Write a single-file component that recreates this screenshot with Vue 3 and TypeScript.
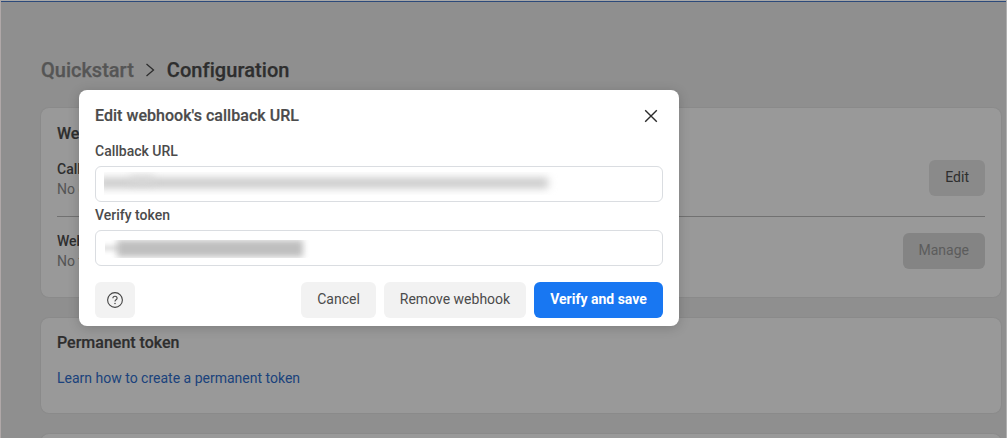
<script setup lang="ts">
const rows = [
  { label: 'Callback URL', value: 'No callback URL configured', action: 'Edit', disabled: false },
  { label: 'Webhook fields', value: 'No fields subscribed', action: 'Manage', disabled: true },
]
</script>

<template>
  <div class="frame">
    <main class="page">
      <h1 class="crumbs">
        <span class="crumb-parent">Quickstart</span>
        <svg class="chev" width="12" height="14" viewBox="0 0 12 14" aria-hidden="true">
          <path d="M1.5 1 L8.5 7 L1.5 13" fill="none" stroke="#4b4b4b" stroke-width="1.3" />
        </svg>
        <span class="crumb-current">Configuration</span>
      </h1>

      <section class="card webhook">
        <h2>Webhook</h2>
        <div v-for="r in rows" :key="r.label" class="row">
          <div class="row-text">
            <div class="row-label">{{ r.label }}</div>
            <div class="row-value">{{ r.value }}</div>
          </div>
          <button class="btn" :class="{ disabled: r.disabled }">{{ r.action }}</button>
        </div>
      </section>

      <section class="card token">
        <h2>Permanent token</h2>
        <a class="link">Learn how to create a permanent token</a>
      </section>

      <section class="card stub"></section>
    </main>

    <div class="overlay">
      <div class="edge"></div>
      <div class="modal">
        <header class="modal-head">
          <span class="modal-title">Edit webhook's callback URL</span>
          <svg width="16" height="16" viewBox="0 0 16 16" aria-hidden="true">
            <path d="M2.2 2.2 L13.8 13.8 M13.8 2.2 L2.2 13.8" stroke="#2b2b2b" stroke-width="1.4" fill="none" />
          </svg>
        </header>

        <label class="field-label first">Callback URL</label>
        <div class="input">
          <div class="blur-box url">
            <div class="blur-bar"></div>
            <div class="blur-blob"></div>
          </div>
        </div>

        <label class="field-label">Verify token</label>
        <div class="input">
          <div class="blur-box tok">
            <div class="blur-lead"></div>
            <div class="blur-bar dark"></div>
          </div>
        </div>

        <footer class="modal-foot">
          <button class="mbtn help" aria-label="Help">
            <svg width="18" height="18" viewBox="0 0 18 18" aria-hidden="true">
              <circle cx="9" cy="9" r="7.4" fill="none" stroke="#444" stroke-width="1.1" />
              <path d="M6.9 7.2 C6.9 4.6 11.1 4.6 11.1 7.2 C11.1 8.8 9 8.8 9 10.4" fill="none" stroke="#444" stroke-width="1.1" />
              <circle cx="9" cy="12.6" r="0.75" fill="#444" />
            </svg>
          </button>
          <span class="spacer"></span>
          <button class="mbtn cancel">Cancel</button>
          <button class="mbtn remove">Remove webhook</button>
          <button class="mbtn primary">Verify and save</button>
        </footer>
      </div>
    </div>
  </div>
</template>

<style>
html, body { margin: 0; background: #f0f0f0; }
</style>

<style scoped>
.frame {
  position: relative;
  width: 1007px;
  height: 438px;
  overflow: hidden;
  box-sizing: border-box;
  font-family: Roboto, "Liberation Sans", sans-serif;
  background: #efefef;
}
.page {
  box-sizing: border-box;
  height: 438px;
  padding: 58px 6px 0 41px;
  display: flex;
  flex-direction: column;
  gap: 21px;
}
.crumbs {
  margin: 0 0 5px;
  height: 24px;
  display: flex;
  align-items: center;
  font-size: 20px;
  line-height: 24px;
  font-weight: 500;
  color: #4e4e4e;
  -webkit-text-stroke: 0.25px currentColor;
}
.crumb-parent { color: #8e8e8e; }
.crumb-current { letter-spacing: 0.06px; }
.chev { margin: 0 10px 0 11px; }
.card {
  box-sizing: border-box;
  background: #fff;
  border-radius: 8px;
  padding: 16px;
  flex: none;
  box-shadow: 0 0 2px rgba(0, 0, 0, 0.12);
}
.card h2 {
  margin: 0;
  font-size: 16px;
  line-height: 20px;
  font-weight: 500;
  color: #4e4e4e;
  -webkit-text-stroke: 0.2px currentColor;
}
.webhook { height: 189px; }
.token { height: 95px; padding-top: 15px; }
.stub { height: 60px; }
.row {
  display: flex;
  align-items: center;
  justify-content: space-between;
  height: 74px;
  padding-bottom: 1px;
}
.webhook h2 { margin-bottom: -3px; }
.webhook h2 + .row .row-text { margin-top: 2px; }
.row + .row { border-top: 1px solid #bdbdbd; height: 68px; padding-bottom: 0; }
.row-label { font-size: 14px; line-height: 20px; font-weight: 500; color: #4e4e4e; }
.row-value { font-size: 14px; line-height: 20px; color: #8e8e8e; }
.btn {
  height: 36px;
  padding: 0 16px 2px;
  border: 0;
  border-radius: 6px;
  background: #e6e6e6;
  color: #4e4e4e;
  font: 400 14px/20px Roboto, sans-serif;
}
.btn.disabled { background: #dcdcdc; color: #9a9a9a; }
.link {
  display: block;
  margin-top: 15px;
  font-size: 14px;
  line-height: 20px;
  color: #2f6fcf;
}
.overlay {
  position: absolute;
  inset: 0;
  background: rgba(0, 0, 0, 0.4);
  box-sizing: border-box;
  border-top: 1px solid #a8a8a8;
  border-left: 1px solid #b0a8a8;
  border-right: 1px solid #b0b0b0;
}
.edge {
  height: 1px;
  background: #2d4a7a;
}
.modal {
  position: absolute;
  left: 78px;
  top: 89px;
  width: 600px;
  height: 236px;
  box-sizing: border-box;
  padding: 0 16px;
  background: #fff;
  border-radius: 8px;
  box-shadow: 0 2px 12px rgba(0, 0, 0, 0.18);
}
.modal-head {
  height: 51px;
  display: flex;
  align-items: center;
  justify-content: space-between;
  padding-right: 4px;
}
.modal-title {
  font-size: 16px;
  line-height: 20px;
  font-weight: 500;
  letter-spacing: 0.04px;
  color: #4b4b4b;
  -webkit-text-stroke: 0.2px currentColor;
}
.field-label {
  display: block;
  font-size: 14px;
  line-height: 20px;
  font-weight: 500;
  color: #4b4b4b;
  margin: 3px 0 5px;
}
.field-label.first { margin-top: 0; }
.input {
  box-sizing: border-box;
  height: 36px;
  border: 1px solid #dadde1;
  border-radius: 6px;
  background: #fff;
  position: relative;
}
.blur-box {
  position: absolute;
  overflow: hidden;
  background: #fff;
}
.blur-box.url { left: 8px; top: 5px; width: 456px; height: 23px; }
.blur-box.tok { left: 9px; top: 9px; width: 208px; height: 18px; }
.blur-bar {
  position: absolute;
  left: -6px;
  right: 12px;
  top: 6px;
  height: 10px;
  background: #c6c6c6;
  filter: blur(4px);
}
.blur-blob {
  position: absolute;
  left: 26px;
  width: 24px;
  top: 4px;
  height: 7px;
  background: #d8d8d8;
  filter: blur(4px);
}
.blur-lead {
  position: absolute;
  left: -4px;
  width: 20px;
  top: 5px;
  height: 6px;
  background: #e2e2e2;
  filter: blur(2px);
}
.blur-bar.dark { left: 12px; right: 10px; top: 0; height: 17px; background: #bfbfbf; filter: blur(3px); }
.modal-foot {
  display: flex;
  align-items: center;
  gap: 8px;
  margin-top: 16px;
}
.spacer { flex: 1; }
.mbtn {
  height: 36px;
  border: 0;
  border-radius: 6px;
  background: #f2f2f2;
  color: #4b4b4b;
  font: 400 14px/20px Roboto, sans-serif;
  padding: 0 0 2px;
}
.help { width: 40px; padding: 0; display: flex; align-items: center; justify-content: center; }
.cancel { width: 75px; }
.remove { width: 142px; }
.primary { width: 129px; background: #1877f2; color: #fff; font-weight: 700; }
</style>
